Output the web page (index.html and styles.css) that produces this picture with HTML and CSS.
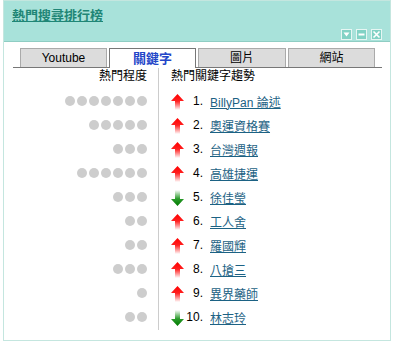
FILE: index.html
```html
<!DOCTYPE html>
<html lang="zh-Hant">
<head>
    <meta charset="UTF-8">
    <title>熱門搜尋排行榜</title>
    <link rel="stylesheet" href="styles.css">
</head>
<body>
    <div class="box">
        <div class="head">
            <a class="title" href="#">熱門搜尋排行榜</a>
            <div class="tools">
                <span class="tool"><svg width="9" height="9" viewBox="0 0 9 9"><polygon points="1.5,2.5 7.5,2.5 4.5,6.5" fill="#fff"/></svg></span>
                <span class="tool"><svg width="9" height="9" viewBox="0 0 9 9"><rect x="1.5" y="3.5" width="6" height="2" fill="#fff"/></svg></span>
                <span class="tool"><svg width="9" height="9" viewBox="0 0 9 9"><path d="M1.5 1.5 L7.5 7.5 M7.5 1.5 L1.5 7.5" stroke="#fff" stroke-width="1.6"/></svg></span>
            </div>
        </div>

        <div class="tabs">
            <div class="tab">Youtube</div>
            <div class="tab on">關鍵字</div>
            <div class="tab">圖片</div>
            <div class="tab">網站</div>
        </div>

        <div class="rank">
            <div class="lev">
                <div class="cap">熱門程度</div>
                <div class="dots"><i></i><i></i><i></i><i></i><i></i><i></i><i></i></div>
                <div class="dots"><i></i><i></i><i></i><i></i><i></i></div>
                <div class="dots"><i></i><i></i><i></i></div>
                <div class="dots"><i></i><i></i><i></i><i></i><i></i><i></i></div>
                <div class="dots"><i></i><i></i><i></i></div>
                <div class="dots"><i></i><i></i></div>
                <div class="dots"><i></i><i></i></div>
                <div class="dots"><i></i><i></i><i></i></div>
                <div class="dots"><i></i></div>
                <div class="dots"><i></i><i></i></div>
            </div>
            <div class="kw">
                <div class="cap">熱門關鍵字趨勢</div>
                <div class="row"><svg class="up" width="13" height="16"><use href="#up"/></svg><span class="num">1.</span><a href="#">BillyPan 論述</a></div>
                <div class="row"><svg width="13" height="16"><use href="#up"/></svg><span class="num">2.</span><a href="#">奧運資格賽</a></div>
                <div class="row"><svg width="13" height="16"><use href="#up"/></svg><span class="num">3.</span><a href="#">台灣週報</a></div>
                <div class="row"><svg width="13" height="16"><use href="#up"/></svg><span class="num">4.</span><a href="#">高雄捷運</a></div>
                <div class="row"><svg width="13" height="16"><use href="#down"/></svg><span class="num">5.</span><a href="#">徐佳瑩</a></div>
                <div class="row"><svg width="13" height="16"><use href="#up"/></svg><span class="num">6.</span><a href="#">工人舍</a></div>
                <div class="row"><svg width="13" height="16"><use href="#up"/></svg><span class="num">7.</span><a href="#">羅國輝</a></div>
                <div class="row"><svg width="13" height="16"><use href="#up"/></svg><span class="num">8.</span><a href="#">八搶三</a></div>
                <div class="row"><svg width="13" height="16"><use href="#up"/></svg><span class="num">9.</span><a href="#">異界藥師</a></div>
                <div class="row"><svg width="13" height="16"><use href="#down"/></svg><span class="num">10.</span><a href="#">林志玲</a></div>
            </div>
        </div>
    </div>

    <svg class="defs" width="0" height="0">
        <defs>
            <linearGradient id="gu" x1="0" y1="0" x2="0" y2="1">
                <stop offset="0" stop-color="#ff0000"/>
                <stop offset="0.45" stop-color="#ff2020"/>
                <stop offset="1" stop-color="#ffffff"/>
            </linearGradient>
            <linearGradient id="gd" x1="0" y1="0" x2="0" y2="1">
                <stop offset="0" stop-color="#ffffff"/>
                <stop offset="0.55" stop-color="#2a9a2a"/>
                <stop offset="1" stop-color="#007a00"/>
            </linearGradient>
            <symbol id="up" viewBox="0 0 13 16">
                <path d="M6.5 0 L13 7 L9 7 L9 16 L4 16 L4 7 L0 7 Z" fill="url(#gu)"/>
            </symbol>
            <symbol id="down" viewBox="0 0 13 16">
                <path d="M4 0 L9 0 L9 9 L13 9 L6.5 16 L0 9 L4 9 Z" fill="url(#gd)"/>
            </symbol>
        </defs>
    </svg>
</body>
</html>
```

FILE: styles.css
```css
body {
    margin: 0;
    background-color: #fff;
    font-family: "Liberation Sans", "Noto Sans CJK TC", sans-serif;
    font-size: 12px;
    color: #000;
}
.box {
    width: 386px;
    height: 339px;
    margin-left: 3px;
    border: 1px solid #c4e6df;
}
.head {
    height: 40px;
    background-color: #a8e2da;
    border-bottom: 1px solid #8fcdc3;
    display: flex;
    flex-direction: column;
    justify-content: space-between;
    padding: 6px 8px 0 8px;
    box-sizing: border-box;
    height: 41px;
}
.title {
    font-family: "Noto Sans CJK TC", sans-serif;
    font-size: 13px;
    font-weight: bold;
    line-height: 16px;
    color: #1f8676;
    text-decoration: underline;
}
.tools {
    display: flex;
    justify-content: flex-end;
    gap: 4px;
    margin-bottom: 1px;
}
.tool {
    width: 9px;
    height: 9px;
    border: 1px solid #e6f6f3;
    background-color: #82d2c5;
    display: flex;
}
.tabs {
    display: flex;
    gap: 2px;
    margin: 6px 8px 0 9px;
    padding-left: 7px;
    border-bottom: 1px solid #777;
}
.tab {
    width: 85px;
    height: 18px;
    line-height: 18px;
    text-align: center;
    background-color: #dcdcdc;
    border: 1px solid #aaa;
    border-bottom: none;
    font-size: 12px;
}
.tab:nth-child(3) {
    width: 86px;
}
.tab.on {
    background-color: #fff;
    border-color: #777;
    height: 19px;
    margin-bottom: -1px;
    font-family: "Noto Sans CJK TC", sans-serif;
    font-size: 13px;
    font-weight: bold;
    color: #2346c8;
}
.rank {
    display: flex;
    margin-left: 9px;
}
.lev {
    width: 134px;
    padding-right: 11px;
    border-right: 1px solid #ccc;
    height: 262px;
}
.cap {
    height: 21px;
    line-height: 14px;
    font-family: "Noto Sans CJK TC", sans-serif;
    font-size: 12px;
}
.lev .cap {
    text-align: right;
}
.dots {
    height: 24px;
    display: flex;
    justify-content: flex-end;
    align-items: center;
    gap: 2px;
}
.dots i {
    width: 10px;
    height: 10px;
    border-radius: 50%;
    background-color: #cdcdcd;
}
.kw {
    padding-left: 12px;
}
.kw .cap {
    padding-left: 0;
}
.row {
    height: 24px;
    display: flex;
    align-items: center;
}
.row svg {
    margin-top: 1px;
}
.num {
    width: 19px;
    text-align: right;
    margin-right: 7px;
}
.row a {
    color: #1c6284;
    text-decoration: underline;
}
.defs {
    position: absolute;
}
```
